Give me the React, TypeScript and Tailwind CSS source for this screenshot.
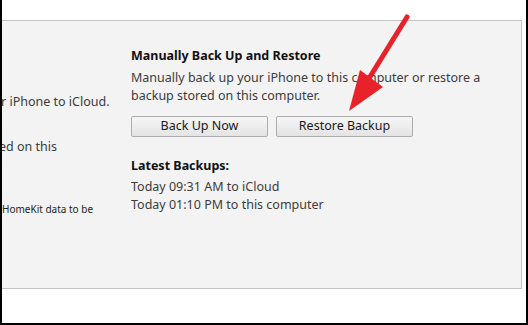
import React from "react";

function Arrow() {
  return (
    <svg
      className="absolute left-0 top-0 pointer-events-none"
      width="528"
      height="325"
      viewBox="0 0 528 325"
    >
      <line x1="405" y1="17" x2="366" y2="80" stroke="#e8222b" strokeWidth="5" strokeLinecap="round" />
      <polygon points="347,111 358,70 381,87" fill="#e8222b" />
    </svg>
  );
}

function Button({ label }: { label: string }) {
  return (
    <button className="w-[137px] h-[21px] rounded-[2px] border border-[#adadad] bg-gradient-to-b from-[#f6f6f6] to-[#e4e4e4] text-[12.5px] text-[#1a1a1a] leading-none">
      {label}
    </button>
  );
}

export default function App() {
  return (
    <div
      className="relative w-[528px] h-[325px] bg-white border-l-2 border-r-2 border-b-2 border-black overflow-hidden"
      style={{ fontFamily: '"Noto Sans", "Open Sans", sans-serif' }}
    >
      <div className="h-[20px]" />
      <div className="flex w-[520px] h-[269px] bg-[#f3f3f3] border-t border-r border-b border-[#c4c4c4] text-[#3c3c3c]">
        <div className="w-[129px] shrink-0 overflow-hidden text-[12.5px] whitespace-nowrap">
          <div className="mt-[71px] h-[20px] leading-[20px] -ml-[1px]">r iPhone to iCloud.</div>
          <div className="mt-[25px] h-[20px] leading-[20px] -ml-[3px]">ed on this</div>
          <div className="mt-[44px] h-[16px] leading-[16px] text-[10px] text-[#222]">HomeKit data to be</div>
        </div>
        <div className="flex flex-col pt-[25px]">
          <div className="text-[12.5px] font-bold text-[#111] leading-[20px]">Manually Back Up and Restore</div>
          <div className="mt-[3px] text-[12.5px] leading-[18px]">
            Manually back up your iPhone to this computer or restore a
            <br />
            backup stored on this computer.
          </div>
          <div className="flex gap-[8px] mt-[11px]">
            <Button label="Back Up Now" />
            <Button label="Restore Backup" />
          </div>
          <div className="mt-[19px] text-[12.5px] font-bold text-[#111] leading-[20px]">Latest Backups:</div>
          <div className="mt-[2px] text-[12.5px] leading-[18px]">
            Today 09:31 AM to iCloud
            <br />
            Today 01:10 PM to this computer
          </div>
        </div>
      </div>
      <Arrow />
    </div>
  );
}
